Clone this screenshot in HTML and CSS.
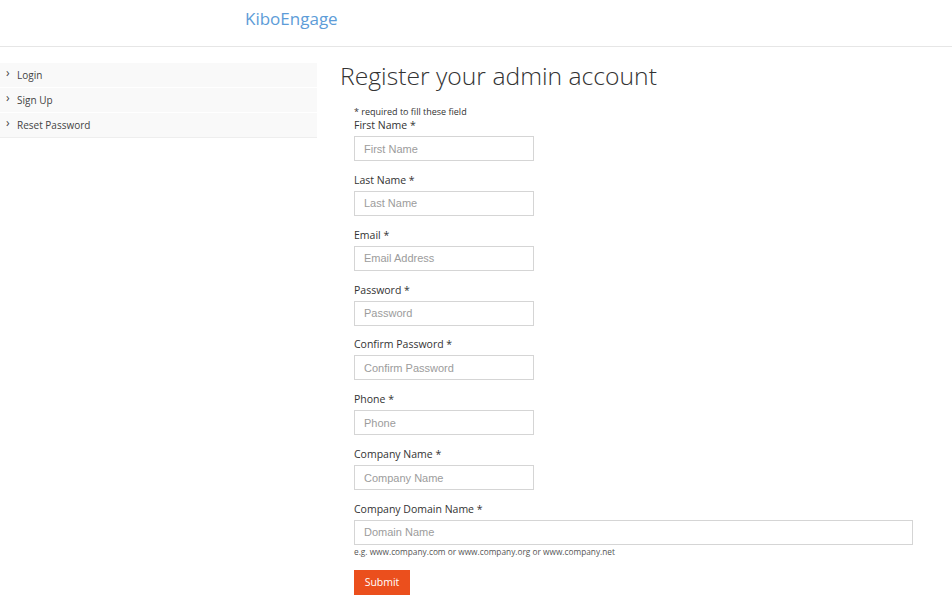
FILE: index.html
```html
<!DOCTYPE html>
<html>
<head>
<meta charset="utf-8">
<link rel="stylesheet" href="styles.css">
</head>
<body>
<header class="topbar">
  <div class="logo">KiboEngage</div>
</header>
<div class="page">
  <aside class="sidebar">
    <ul class="nav">
      <li><span class="chev">&#8250;</span>Login</li>
      <li><span class="chev">&#8250;</span>Sign Up</li>
      <li><span class="chev">&#8250;</span>Reset Password</li>
    </ul>
  </aside>
  <main class="content">
    <h1 class="title">Register your admin account</h1>
    <form class="form">
      <p class="req">* required to fill these field</p>
      <div class="group first">
        <label>First Name *</label>
        <input class="inp" placeholder="First Name">
      </div>
      <div class="group">
        <label>Last Name *</label>
        <input class="inp" placeholder="Last Name">
      </div>
      <div class="group">
        <label>Email *</label>
        <input class="inp" placeholder="Email Address">
      </div>
      <div class="group">
        <label>Password *</label>
        <input class="inp" placeholder="Password">
      </div>
      <div class="group">
        <label>Confirm Password *</label>
        <input class="inp" placeholder="Confirm Password">
      </div>
      <div class="group">
        <label>Phone *</label>
        <input class="inp" placeholder="Phone">
      </div>
      <div class="group">
        <label>Company Name *</label>
        <input class="inp" placeholder="Company Name">
      </div>
      <div class="group">
        <label>Company Domain Name *</label>
        <input class="inp wide" placeholder="Domain Name">
        <p class="hint">e.g. www.company.com or www.company.org or www.company.net</p>
      </div>
      <button type="button" class="submit">Submit</button>
    </form>
  </main>
</div>
</body>
</html>
```
FILE: styles.css
```css
* { box-sizing: border-box; }
html, body { margin: 0; padding: 0; background: #fff; }
body { font-family: "Open Sans", "Liberation Sans", sans-serif; color: #333; }
.topbar {
  height: 47px;
  border-bottom: 1px solid #e6e6e6;
  padding-left: 245px;
}
.logo {
  font-size: 17px;
  line-height: 37px;
  color: #5d9cd8;
}
.page {
  display: flex;
  padding-top: 16px;
}
.sidebar { width: 317px; flex: none; }
.nav { list-style: none; margin: 0; padding: 0; }
.nav li {
  height: 25px;
  line-height: 24px;
  background: #f9f9f9;
  border-bottom: 1px solid #fff;
  font-size: 10px;
  color: #444;
  padding-left: 6px;
}
.nav li:last-child { border-bottom: 1px solid #eee; }
.chev { display: inline-block; width: 11px; font-size: 12px; position: relative; top: -2px; }
.content { padding-left: 23px; flex: 1; }
.title {
  margin: 0;
  font-weight: 300;
  font-size: 24.7px;
  line-height: 26px;
  color: #333;
}
.form { padding-left: 14px; padding-top: 18px; }
.req { margin: 0; font-size: 9px; line-height: 10px; color: #333; }
.group { margin-top: 10.85px; }
.group.first { margin-top: 0; }
.group label { display: block; font-size: 10.5px; line-height: 16px; color: #333; margin-bottom: 3px; }
.inp {
  display: block;
  width: 180px;
  height: 25px;
  border: 1px solid #d5d5d5;
  padding: 0 9px;
  font-family: "Liberation Sans", Arial, sans-serif;
  font-size: 11px;
  margin: 0;
  outline: none;
}
.inp::placeholder { color: #9c9c9c; }
.inp.wide { width: 559px; }
.hint { margin: 2px 0 0; font-size: 8.3px; line-height: 10px; color: #555; }
.submit {
  margin-top: 13px;
  width: 56px;
  height: 25px;
  background: #eb4f1d;
  color: #fff;
  border: 0;
  font-family: "Open Sans", sans-serif;
  font-size: 10.5px;
  padding: 0;
}
```
